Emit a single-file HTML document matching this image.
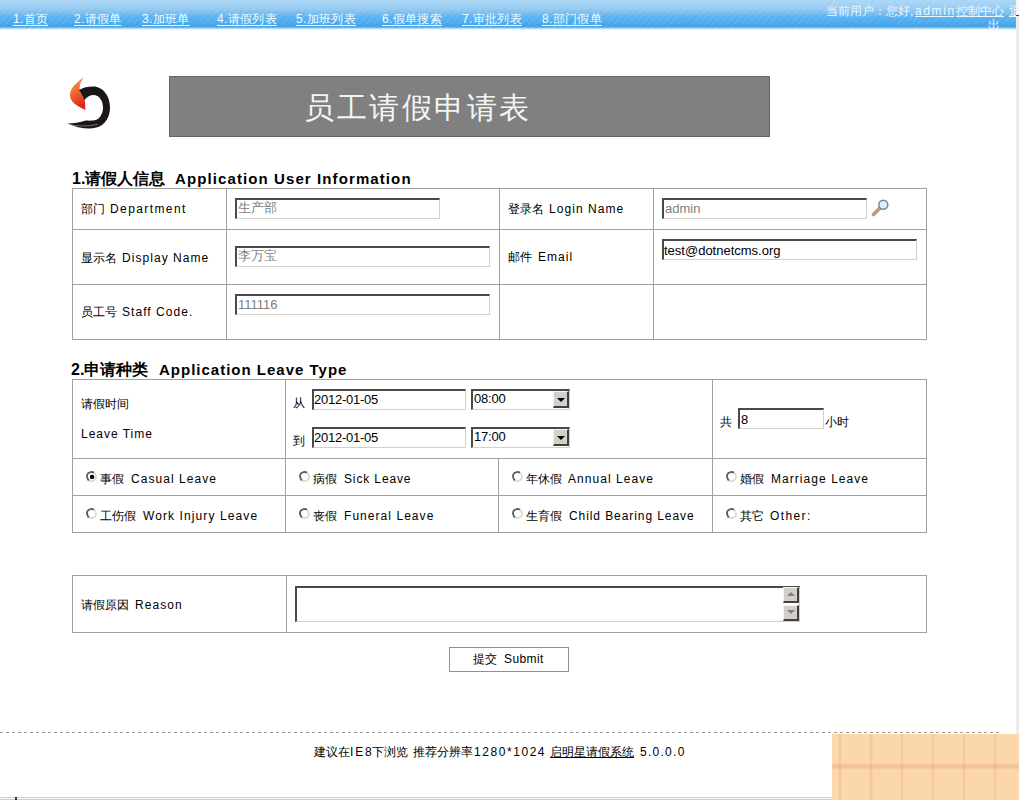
<!DOCTYPE html>
<html><head><meta charset="utf-8">
<style>
html,body{margin:0;padding:0;background:#fff;width:1019px;height:800px;overflow:hidden;position:relative;font-family:"Liberation Sans",sans-serif;font-size:12px;color:#000}
.a{position:absolute;white-space:nowrap;line-height:14px}
.e{position:absolute;white-space:nowrap;line-height:14px;letter-spacing:1.05px}
#hdr{position:absolute;left:0;top:0;width:1016px;height:30px;
 background:repeating-linear-gradient(135deg,rgba(255,255,255,0.06) 0 2px,rgba(255,255,255,0) 2px 5px),linear-gradient(#acd7f7 0,#98ccf3 8px,#74bbed 14px,#57b3f4 17px,#4eabf0 22px,#42a0e3 26px,#4fa6e2 27px,#8cc4e6 28px,#d8f0fa 29px,#eef9fd 30px)}
.nav{position:absolute;top:12px;text-underline-offset:2px;text-decoration-color:#c4f6ff;letter-spacing:0.3px;color:#f0fcff;text-decoration:underline;white-space:nowrap;line-height:14px;font-size:12px}
.ln{position:absolute;background:#a0a0a0}
.ip{position:absolute;box-sizing:border-box;background:#fff;border-top:2px solid #4a4a4a;border-left:2px solid #4a4a4a;border-right:1px solid #d4d0c8;border-bottom:1px solid #d4d0c8}
.it{position:absolute;white-space:nowrap;font-size:13px;line-height:15px;color:#808080}
.h2{position:absolute;font-size:15px;font-weight:bold;white-space:nowrap;line-height:18px}
.rad{position:absolute;box-sizing:border-box;width:11px;height:11px;border-radius:50%;border:2px solid #dcdcd8;border-top-color:#606060;border-left-color:#606060;background:#fff;transform:rotate(-10deg)}
.btn{position:absolute;box-sizing:border-box;background:#d4d0c8;border-top:1px solid #f4f4f0;border-left:1px solid #f4f4f0;border-right:2px solid #404040;border-bottom:2px solid #404040}
</style></head><body>

<div id="hdr"></div>
<div class="nav" style="left:13px">1.首页</div>
<div class="nav" style="left:74px">2.请假单</div>
<div class="nav" style="left:142px">3.加班单</div>
<div class="nav" style="left:217px">4.请假列表</div>
<div class="nav" style="left:296px">5.加班列表</div>
<div class="nav" style="left:382px">6.假单搜索</div>
<div class="nav" style="left:462px">7.审批列表</div>
<div class="nav" style="left:542px">8.部门假单</div>
<div class="a" style="left:826px;top:4px;color:#eaf8ff">当前用户：您好,</div>
<div class="a" style="left:915px;top:4px;color:#eaf8ff;text-decoration:underline;text-underline-offset:1px"><span style="letter-spacing:1.6px">admi</span>n</div>
<div class="a" style="left:956px;top:4px;color:#eaf8ff;text-decoration:underline">控制中心</div>
<div class="a" style="left:1009px;top:4px;color:#eaf8ff;text-decoration:underline">退</div>
<div class="a" style="left:988px;top:18px;color:#eaf8ff">出</div>
<!-- right frame strip -->
<div style="position:absolute;left:1016px;top:0;width:3px;height:15px;background:#f4f4f4"></div>
<div style="position:absolute;left:1016px;top:15px;width:3px;height:1px;background:#404040"></div>
<div style="position:absolute;left:1016px;top:16px;width:3px;height:718px;background:repeating-conic-gradient(#d8d8d8 0 25%,#ffffff 0 50%) 0 0/2px 2px"></div>

<!-- logo -->
<svg style="position:absolute;left:55px;top:65px" width="70" height="70" viewBox="55 65 70 70">
 <defs><filter id="bl" x="-20%" y="-20%" width="140%" height="140%"><feGaussianBlur stdDeviation="0.45"/></filter><linearGradient id="fl" x1="0" y1="0" x2="0.3" y2="1"><stop offset="0" stop-color="#f5a05a"/><stop offset="0.45" stop-color="#f07038"/><stop offset="1" stop-color="#e42418"/></linearGradient></defs>
 <path filter="url(#bl)" d="M83.5,77.5 C77,82 70,88 70,95 C70,102 77,106 85.5,110 C85,106 85.5,102 84.5,99.5 C82,96 79.5,93 79.5,89 C79.5,85 81,81 83.5,77.5 Z" fill="url(#fl)"/>
 <path filter="url(#bl)" d="M79,90 C83,87.5 88,86.5 93,86.5 C103,86.5 110,96 110,107.5 C110,120 102,128.5 90,128.5 C82,128.5 74,126.5 67.5,123.5 C74,123.5 80,122.5 86,120.5 C88,120.7 90.5,120.7 93.5,120.5 C99.5,120 103,114 103,107.5 C103,100.5 99,95 93.5,95 C90,95 86.5,97 84.5,100 Z" fill="#1a1212"/>
 <path d="M70,124.6 C78,126.4 88,126.6 98,124.2" stroke="#fff" stroke-width="0.7" fill="none" opacity="0.55"/>
</svg>

<!-- title -->
<div style="position:absolute;left:169px;top:76px;width:601px;height:61px;box-sizing:border-box;background:#808080;border:1px solid #646464"></div>
<div class="a" style="left:304px;top:91px;font-size:30px;line-height:34px;color:#f4f4f4;letter-spacing:2.5px;font-weight:300">员工请假申请表</div>

<!-- section 1 -->
<div class="h2" style="left:72px;top:170px;font-size:16px">1.请假人信息</div>
<div class="h2" style="left:175px;top:170px;letter-spacing:1.1px">Application User Information</div>
<div class="ln" style="left:72px;top:188px;width:855px;height:1px"></div>
<div class="ln" style="left:72px;top:229px;width:855px;height:1px"></div>
<div class="ln" style="left:72px;top:284px;width:855px;height:1px"></div>
<div class="ln" style="left:72px;top:339px;width:855px;height:1px"></div>
<div class="ln" style="left:72px;top:188px;width:1px;height:152px"></div>
<div class="ln" style="left:226px;top:188px;width:1px;height:152px"></div>
<div class="ln" style="left:499px;top:188px;width:1px;height:152px"></div>
<div class="ln" style="left:653px;top:188px;width:1px;height:152px"></div>
<div class="ln" style="left:926px;top:188px;width:1px;height:152px"></div>

<div class="a" style="left:81px;top:202px">部门</div><div class="e" style="left:110px;top:202px;letter-spacing:1.4px">Department</div>
<div class="a" style="left:81px;top:251px">显示名</div><div class="e" style="left:122px;top:251px">Display Name</div>
<div class="a" style="left:81px;top:305px">员工号</div><div class="e" style="left:122px;top:305px">Staff Code.</div>
<div class="a" style="left:508px;top:202px">登录名</div><div class="e" style="left:549px;top:202px">Login Name</div>
<div class="a" style="left:508px;top:250px">邮件</div><div class="e" style="left:538px;top:250px">Email</div>

<div class="ip" style="left:235px;top:198px;width:205px;height:21px"></div><div class="it" style="left:238px;top:200px">生产部</div>
<div class="ip" style="left:235px;top:246px;width:255px;height:21px"></div><div class="it" style="left:238px;top:248px">李万宝</div>
<div class="ip" style="left:235px;top:294px;width:255px;height:21px"></div><div class="it" style="left:238px;top:297px">111116</div>
<div class="ip" style="left:662px;top:198px;width:205px;height:21px"></div><div class="it" style="left:665px;top:201px">admin</div>
<div class="ip" style="left:662px;top:239px;width:255px;height:21px"></div><div class="it" style="left:664px;top:243px;color:#000">test@dotnetcms.org</div>
<svg style="position:absolute;left:866px;top:194px" width="26" height="26" viewBox="866 194 26 26">
 <line x1="873.5" y1="214.5" x2="879.5" y2="208.5" stroke="#bc9c84" stroke-width="3.8" stroke-linecap="round"/>
 <circle cx="883.3" cy="204.8" r="4.5" fill="#d8f2fc" stroke="#6d8aa2" stroke-width="1.5"/>
</svg>

<!-- section 2 -->
<div class="h2" style="left:71px;top:361px;font-size:16px">2.申请种类</div>
<div class="h2" style="left:159px;top:361px;letter-spacing:1.0px">Application Leave Type</div>
<div class="ln" style="left:72px;top:379px;width:855px;height:1px"></div>
<div class="ln" style="left:72px;top:458px;width:855px;height:1px"></div>
<div class="ln" style="left:72px;top:495px;width:855px;height:1px"></div>
<div class="ln" style="left:72px;top:532px;width:855px;height:1px"></div>
<div class="ln" style="left:72px;top:379px;width:1px;height:154px"></div>
<div class="ln" style="left:285px;top:379px;width:1px;height:154px"></div>
<div class="ln" style="left:498px;top:458px;width:1px;height:75px"></div>
<div class="ln" style="left:712px;top:379px;width:1px;height:154px"></div>
<div class="ln" style="left:926px;top:379px;width:1px;height:154px"></div>

<div class="a" style="left:81px;top:397px">请假时间</div>
<div class="e" style="left:81px;top:427px;letter-spacing:0.98px">Leave Time</div>
<div class="a" style="left:293px;top:396px">从</div>
<div class="a" style="left:293px;top:434px">到</div>
<div class="ip" style="left:312px;top:389px;width:154px;height:21px"></div><div class="it" style="left:314px;top:392px;color:#000;letter-spacing:-0.24px">2012-01-05</div>
<div class="ip" style="left:312px;top:427px;width:154px;height:21px"></div><div class="it" style="left:314px;top:430px;color:#000;letter-spacing:-0.24px">2012-01-05</div>
<div class="ip" style="left:471px;top:389px;width:99px;height:21px"></div><div class="it" style="left:474px;top:391px;color:#000;letter-spacing:-0.2px">08:00</div>
<div class="btn" style="left:553px;top:391px;width:16px;height:17px"></div>
<div style="position:absolute;left:557px;top:398px;width:0;height:0;border-left:4px solid transparent;border-right:4px solid transparent;border-top:4px solid #000"></div>
<div class="ip" style="left:471px;top:427px;width:99px;height:21px"></div><div class="it" style="left:474px;top:429px;color:#000;letter-spacing:-0.2px">17:00</div>
<div class="btn" style="left:553px;top:429px;width:16px;height:17px"></div>
<div style="position:absolute;left:557px;top:436px;width:0;height:0;border-left:4px solid transparent;border-right:4px solid transparent;border-top:4px solid #000"></div>
<div class="a" style="left:720px;top:415px">共</div>
<div class="ip" style="left:738px;top:408px;width:86px;height:21px"></div><div class="it" style="left:741px;top:412px;color:#000">8</div>
<div class="a" style="left:825px;top:415px">小时</div>

<div class="rad" style="left:86px;top:471px"><div style="position:absolute;left:2px;top:2px;width:4px;height:4px;background:#000;border-radius:1px"></div></div>
<div class="a" style="left:100px;top:472px">事假</div><div class="e" style="left:131px;top:472px">Casual Leave</div>
<div class="rad" style="left:299px;top:471px"></div>
<div class="a" style="left:313px;top:472px">病假</div><div class="e" style="left:344px;top:472px;letter-spacing:0.87px">Sick Leave</div>
<div class="rad" style="left:512px;top:471px"></div>
<div class="a" style="left:526px;top:472px">年休假</div><div class="e" style="left:568px;top:472px">Annual Leave</div>
<div class="rad" style="left:726px;top:471px"></div>
<div class="a" style="left:740px;top:472px">婚假</div><div class="e" style="left:771px;top:472px">Marriage Leave</div>

<div class="rad" style="left:86px;top:508px"></div>
<div class="a" style="left:100px;top:509px">工伤假</div><div class="e" style="left:143px;top:509px;letter-spacing:1.1px">Work Injury Leave</div>
<div class="rad" style="left:299px;top:508px"></div>
<div class="a" style="left:313px;top:509px">丧假</div><div class="e" style="left:344px;top:509px">Funeral Leave</div>
<div class="rad" style="left:512px;top:508px"></div>
<div class="a" style="left:526px;top:509px">生育假</div><div class="e" style="left:569px;top:509px;letter-spacing:0.92px">Child Bearing Leave</div>
<div class="rad" style="left:726px;top:508px"></div>
<div class="a" style="left:740px;top:509px">其它</div><div class="e" style="left:770px;top:509px;letter-spacing:1.4px">Other:</div>

<!-- section 3 -->
<div class="ln" style="left:72px;top:575px;width:855px;height:1px"></div>
<div class="ln" style="left:72px;top:632px;width:855px;height:1px"></div>
<div class="ln" style="left:72px;top:575px;width:1px;height:58px"></div>
<div class="ln" style="left:286px;top:575px;width:1px;height:58px"></div>
<div class="ln" style="left:926px;top:575px;width:1px;height:58px"></div>
<div class="a" style="left:81px;top:598px">请假原因</div><div class="e" style="left:135px;top:598px">Reason</div>
<div class="ip" style="left:295px;top:586px;width:505px;height:36px"></div>
<div class="btn" style="left:783px;top:587px;width:16px;height:16px"></div>
<div style="position:absolute;left:787px;top:592px;width:0;height:0;border-left:4px solid transparent;border-right:4px solid transparent;border-bottom:4px solid #808080"></div>
<div class="btn" style="left:783px;top:605px;width:16px;height:16px"></div>
<div style="position:absolute;left:787px;top:610px;width:0;height:0;border-left:4px solid transparent;border-right:4px solid transparent;border-top:4px solid #808080"></div>

<!-- submit -->
<div style="position:absolute;left:449px;top:647px;width:120px;height:25px;box-sizing:border-box;border:1px solid #909090;background:#fff"></div>
<div class="a" style="left:473px;top:652px">提交</div><div class="e" style="left:504px;top:652px;letter-spacing:0.4px">Submit</div>

<!-- footer -->
<div style="position:absolute;left:0;top:732px;width:1000px;height:1px;background:repeating-linear-gradient(90deg,#9a9a9a 0 3px,transparent 3px 6px)"></div>
<div class="a" style="left:314px;top:745px">建议在</div>
<div class="a" style="left:350px;top:745px;letter-spacing:1.8px">IE8</div>
<div class="a" style="left:372px;top:745px">下浏览</div>
<div class="a" style="left:413px;top:745px">推荐分辨率</div>
<div class="a" style="left:474px;top:745px;letter-spacing:1.56px">1280*1024</div>
<div class="a" style="left:550px;top:745px;text-decoration:underline;text-underline-offset:1px">启明星请假系统</div>
<div class="a" style="left:640px;top:745px;letter-spacing:1.27px">5.0.0.0</div>
<div style="position:absolute;left:832px;top:734px;width:187px;height:66px;background:
 linear-gradient(rgba(0,0,0,0) 0 29px,rgba(215,145,95,0.12) 30px,rgba(215,145,95,0.28) 32px,rgba(215,145,95,0.28) 33px,rgba(215,145,95,0.12) 35px,rgba(0,0,0,0) 36px),
 repeating-linear-gradient(90deg,rgba(0,0,0,0) 0 6px,rgba(205,155,105,0.14) 7px,rgba(205,155,105,0.26) 8px,rgba(205,155,105,0.14) 9px,rgba(0,0,0,0) 10px 31px),
 #fcd7a9"></div>
<div style="position:absolute;left:0;top:797px;width:832px;height:1px;background:#d2d0c8"></div>
<div style="position:absolute;left:0;top:798px;width:832px;height:1px;background:#fafaf6"></div>
<div style="position:absolute;left:0;top:799px;width:832px;height:1px;background:#d0cfc8"></div>
<div style="position:absolute;left:15px;top:797px;width:2px;height:3px;background:#333"></div>
</body></html>
